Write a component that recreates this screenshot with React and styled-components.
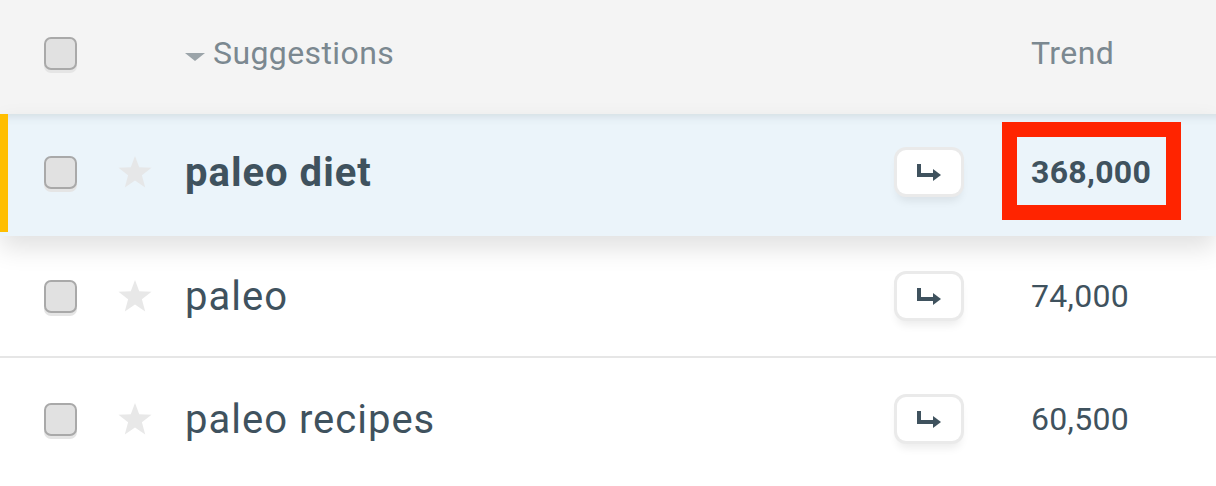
import React from 'react';
import styled, { createGlobalStyle } from 'styled-components';

const GlobalStyle = createGlobalStyle`
  html, body {
    margin: 0;
    padding: 0;
    background: #ffffff;
    font-family: "Roboto", "Liberation Sans", sans-serif;
  }
`;

const Table = styled.div`
  width: 1216px;
  height: 486px;
  overflow: hidden;
  background: #ffffff;
`;

const columns = `
  display: grid;
  grid-template-columns: 75px 66px 1fr 134px 185px;
  align-items: center;
  padding-left: 44px;
  box-sizing: border-box;
`;

const Header = styled.div`
  ${columns}
  height: 114px;
  padding-bottom: 8px;
  background: #f4f4f4;
  color: #7b8890;
  font-size: 32px;
  letter-spacing: 0.4px;
`;

const SortLabel = styled.div`
  display: flex;
  align-items: center;
  gap: 8px;
`;

const SortArrow = styled.span`
  width: 0;
  height: 0;
  margin-top: 8px;
  border-left: 10px solid transparent;
  border-right: 10px solid transparent;
  border-top: 8px solid #9ba4a9;
`;

const Row = styled.div`
  ${columns}
  position: relative;
  height: 122px;
  padding-bottom: ${(p) => (p.$active ? '4px' : '0')};
  border-bottom: 2px solid ${(p) => (p.$active ? 'transparent' : '#e6e6e6')};
  background: ${(p) => (p.$active ? '#ebf4fa' : '#ffffff')};
  color: #3f525e;
  z-index: ${(p) => (p.$active ? 2 : 1)};
  box-shadow: ${(p) => (p.$active
    ? 'inset 0 12px 10px -10px rgba(60, 80, 90, 0.16), 0 12px 24px rgba(0, 0, 0, 0.12)'
    : 'none')};

  &:last-child {
    border-bottom: none;
  }

  &::before {
    content: "";
    display: ${(p) => (p.$active ? 'block' : 'none')};
    position: absolute;
    left: 0;
    top: 0;
    bottom: 2px;
    width: 8px;
    background: #ffbe00;
  }
`;

const Checkbox = styled.span`
  display: block;
  width: 33px;
  height: 33px;
  box-sizing: border-box;
  border: 2.5px solid #a9a9a9;
  border-radius: 7px;
  background: #e1e1e1;
  box-shadow: 0 3px 0 #e5e5e5;
`;

const StarIcon = styled.svg`
  width: 34px;
  height: 32px;
  margin-left: -1px;
  fill: ${(p) => (p.$active ? '#e6e7e8' : '#e8e8e8')};
`;

const Keyword = styled.div`
  font-size: 40px;
  font-weight: ${(p) => (p.$bold ? 700 : 400)};
  letter-spacing: 1px;
`;

const JumpButton = styled.button`
  width: 64px;
  height: 44px;
  display: flex;
  align-items: center;
  justify-content: center;
  padding: 0;
  border: none;
  border-radius: 9px;
  background: #ffffff;
  box-shadow: 0 0 0 3px #eaeaea, 0 7px 8px rgba(0, 0, 0, 0.08);
  cursor: pointer;
`;

const Trend = styled.div`
  font-size: 32px;
  font-weight: ${(p) => (p.$bold ? 700 : 400)};
  letter-spacing: 0.3px;
`;

const Number = styled.span`
  position: relative;
  display: inline-block;
`;

const Highlight = styled.span`
  position: absolute;
  left: -29px;
  top: -31px;
  width: 179px;
  height: 98px;
  box-sizing: border-box;
  border: 15px solid #ff2400;
`;

const Star = ({ active }) => (
  <StarIcon $active={active} viewBox="0 0 34 32">
    <polygon points="17,0 21.2,11.2 33.5,11.7 23.9,19.3 27.2,31.5 17,24.6 6.8,31.5 10.1,19.3 0.5,11.7 12.8,11.2" />
  </StarIcon>
);

const JumpIcon = () => (
  <svg width="24" height="17" viewBox="0 0 24 17" fill="#3f525e">
    <rect x="0" y="0" width="4" height="13" />
    <rect x="0" y="9" width="17" height="4" />
    <polygon points="16,5 24,11 16,17" />
  </svg>
);

const rows = [
  { keyword: 'paleo diet', trend: '368,000', active: true },
  { keyword: 'paleo', trend: '74,000' },
  { keyword: 'paleo recipes', trend: '60,500' },
];

const App = () => (
  <Table>
    <GlobalStyle />
    <Header>
      <Checkbox />
      <span />
      <SortLabel>
        <SortArrow />
        Suggestions
      </SortLabel>
      <span />
      <div>Trend</div>
    </Header>
    {rows.map((row) => (
      <Row key={row.keyword} $active={row.active}>
        <Checkbox />
        <Star active={row.active} />
        <Keyword $bold={row.active}>{row.keyword}</Keyword>
        <JumpButton aria-label="Go">
          <JumpIcon />
        </JumpButton>
        <Trend $bold={row.active}>
          <Number>
            {row.trend}
            {row.active ? <Highlight /> : null}
          </Number>
        </Trend>
      </Row>
    ))}
  </Table>
);

export default App;
